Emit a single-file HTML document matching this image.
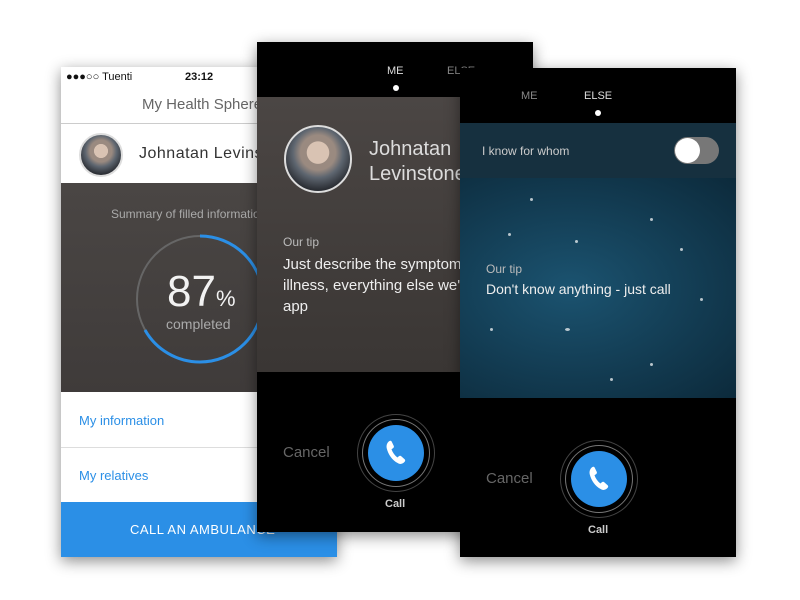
<!DOCTYPE html>
<html><head><meta charset="utf-8"><style>
*{margin:0;padding:0;box-sizing:border-box}
body{width:800px;height:600px;background:#fff;position:relative;overflow:hidden;font-family:"Liberation Sans",sans-serif}
.s{position:absolute;overflow:hidden;box-shadow:0 4px 14px rgba(0,0,0,.45)}
.a{position:absolute}
.av{position:absolute;border-radius:50%;background:radial-gradient(circle at 50% 40%,#d9c3b3 0 22%,#9a8a80 23% 35%,#5e6670 50%,#2a2d33 75%);border:2px solid #ddd}
.btn{position:absolute;width:56px;height:56px;border-radius:50%;background:#2b8fe6;box-shadow:0 0 0 5px #000,0 0 0 6px #777,0 0 0 10px #000,0 0 0 11px #444}
.st{position:absolute;width:3px;height:3px;border-radius:50%;background:rgba(255,255,255,.7)}
</style></head><body>
<!-- screen 1 -->
<div class="s" style="left:61px;top:67px;width:276px;height:490px;background:#fff">
 <div class="a" style="left:5px;top:4px;font-size:11px;color:#111">●●●○○ Tuenti</div>
 <div class="a" style="left:124px;top:4px;font-size:11px;color:#111;font-weight:bold">23:12</div>
 <div class="a" style="left:81px;top:29px;font-size:15px;color:#666">My Health Sphere</div>
 <div class="a" style="left:0;top:56px;width:276px;height:1px;background:#ccc"></div>
 <div class="av" style="left:18px;top:66px;width:44px;height:44px"></div>
 <div class="a" style="left:78px;top:78px;font-size:16px;color:#333;white-space:nowrap;letter-spacing:.5px">Johnatan Levinstone</div>
 <div class="a" style="left:0;top:116px;width:276px;height:209px;background:linear-gradient(#4a4644,#3f3b3a)"></div>
 <div class="a" style="left:50px;top:140px;font-size:12px;color:#aaa;white-space:nowrap">Summary of filled information</div>
 <svg class="a" style="left:72px;top:165px" width="134" height="134"><circle cx="67" cy="67" r="63" fill="none" stroke="#666" stroke-width="2"/><path d="M67 4A63 63 0 0 1 130 67A63 63 0 0 1 67 130A63 63 0 0 1 12 98" fill="none" stroke="#2b8fe6" stroke-width="3"/></svg>
 <div class="a" style="left:106px;top:200px;font-size:44px;font-weight:300;color:#f2f2f2">87<span style="font-size:22px">%</span></div>
 <div class="a" style="left:105px;top:249px;font-size:14px;color:#aaa">completed</div>
 <div class="a" style="left:18px;top:346px;font-size:13px;color:#2b8fe6">My information</div>
 <div class="a" style="left:0;top:380px;width:276px;height:1px;background:#ddd"></div>
 <div class="a" style="left:18px;top:401px;font-size:13px;color:#2b8fe6">My relatives</div>
 <div class="a" style="left:0;top:435px;width:276px;height:55px;background:#2b8fe6"></div>
 <div class="a" style="left:69px;top:455px;font-size:13px;color:#fff;letter-spacing:.5px;white-space:nowrap">CALL AN AMBULANCE</div>
</div>
<!-- screen 2 -->
<div class="s" style="left:257px;top:42px;width:276px;height:490px;background:#000">
 <div class="a" style="left:130px;top:23px;font-size:11px;color:#ddd">ME</div>
 <div class="a" style="left:190px;top:23px;font-size:11px;color:#888">ELSE</div>
 <div class="a" style="left:136px;top:43px;width:6px;height:6px;border-radius:50%;background:#fff"></div>
 <div class="a" style="left:0;top:55px;width:276px;height:275px;background:linear-gradient(#4b4644,#3a3634)"></div>
 <div class="av" style="left:27px;top:83px;width:68px;height:68px"></div>
 <div class="a" style="left:112px;top:95px;font-size:20px;font-weight:300;color:#ddd;line-height:25px">Johnatan<br>Levinstone</div>
 <div class="a" style="left:26px;top:193px;font-size:12px;color:#bbb">Our tip</div>
 <div class="a" style="left:26px;top:212px;font-size:15px;color:#eee;line-height:21px;width:236px">Just describe the symptoms of illness, everything else we'll do the app</div>
 <div class="a" style="left:26px;top:402px;font-size:15px;color:#666">Cancel</div>
 <div class="btn" style="left:111px;top:383px"></div>
 <svg class="a" style="left:124px;top:396px" width="30" height="30" viewBox="0 0 24 24"><path d="M6.6 2.5c.8-.5 1.6-.3 2 .5l1.6 3.3c.3.7.1 1.4-.5 1.8l-1.3.9c.9 2.6 2.5 4.9 4.7 6.6l1.2-1c.6-.5 1.4-.5 1.9 0l2.7 2.4c.6.6.6 1.4 0 2-1.6 1.8-3.6 2.3-5.4 1.1C9 17.9 5.8 13.2 4.6 8.3c-.5-2.3.2-4.6 2-5.8z" fill="#fff"/></svg>
 <div class="a" style="left:128px;top:456px;font-size:11px;color:#ccc;font-weight:bold">Call</div>
</div>
<!-- screen 3 -->
<div class="s" style="left:460px;top:68px;width:276px;height:489px;background:#000">
 <div class="a" style="left:61px;top:22px;font-size:11px;color:#888">ME</div>
 <div class="a" style="left:124px;top:22px;font-size:11px;color:#ddd">ELSE</div>
 <div class="a" style="left:135px;top:42px;width:6px;height:6px;border-radius:50%;background:#fff"></div>
 <div class="a" style="left:0;top:55px;width:276px;height:55px;background:#16303f"></div>
 <div class="a" style="left:22px;top:76px;font-size:12px;color:#ccc">I know for whom</div>
 <div class="a" style="left:214px;top:69px;width:45px;height:27px;border-radius:14px;background:#777"></div>
 <div class="a" style="left:215px;top:70px;width:25px;height:25px;border-radius:50%;background:#fff"></div>
 <div class="a" style="left:0;top:110px;width:276px;height:220px;background:radial-gradient(ellipse at 40% 50%,#1b5370,#123a50 60%,#0c2a3b)">
  <div class="st" style="left:48px;top:55px"></div><div class="st" style="left:115px;top:62px"></div><div class="st" style="left:190px;top:40px"></div><div class="st" style="left:30px;top:150px"></div><div class="st" style="left:105px;top:150px;width:5px"></div><div class="st" style="left:190px;top:185px"></div><div class="st" style="left:240px;top:120px"></div><div class="st" style="left:70px;top:20px"></div><div class="st" style="left:150px;top:200px"></div><div class="st" style="left:220px;top:70px"></div>
 </div>
 <div class="a" style="left:26px;top:194px;font-size:12px;color:#bbb">Our tip</div>
 <div class="a" style="left:26px;top:213px;font-size:14px;color:#eee">Don't know anything - just call</div>
 <div class="a" style="left:26px;top:402px;font-size:15px;color:#666">Cancel</div>
 <div class="btn" style="left:111px;top:383px"></div>
 <svg class="a" style="left:124px;top:396px" width="30" height="30" viewBox="0 0 24 24"><path d="M6.6 2.5c.8-.5 1.6-.3 2 .5l1.6 3.3c.3.7.1 1.4-.5 1.8l-1.3.9c.9 2.6 2.5 4.9 4.7 6.6l1.2-1c.6-.5 1.4-.5 1.9 0l2.7 2.4c.6.6.6 1.4 0 2-1.6 1.8-3.6 2.3-5.4 1.1C9 17.9 5.8 13.2 4.6 8.3c-.5-2.3.2-4.6 2-5.8z" fill="#fff"/></svg>
 <div class="a" style="left:128px;top:456px;font-size:11px;color:#ccc;font-weight:bold">Call</div>
</div>
</body></html>
